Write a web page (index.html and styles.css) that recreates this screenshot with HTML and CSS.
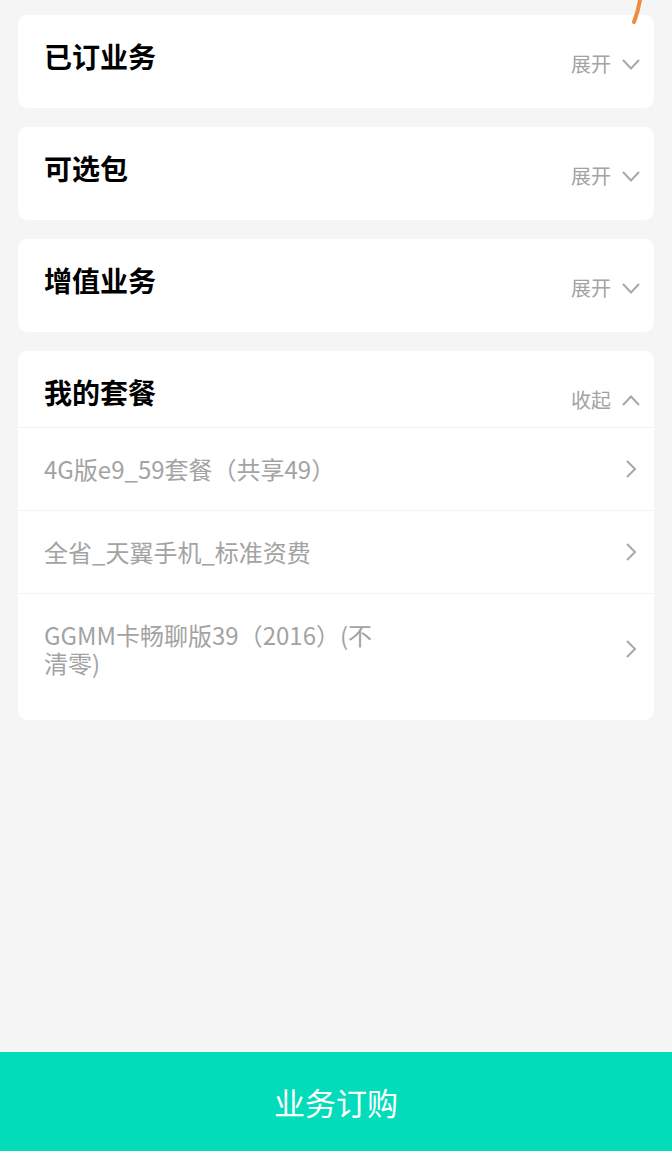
FILE: index.html
```html
<!DOCTYPE html>
<html lang="zh-CN">
<head>
    <meta charset="utf-8" />
    <title>业务订购</title>
    <link rel="stylesheet" href="styles.css">
</head>
<body>
    <div class="page">
        <div class="content">
            <div class="card">
                <div class="card-head">
                    <span class="title">已订业务</span>
                    <span class="toggle">展开
                        <svg class="arrow" width="18" height="11" viewBox="0 0 18 11"><path d="M1 1 L9 9.5 L17 1" /></svg>
                    </span>
                </div>
            </div>
            <div class="card">
                <div class="card-head">
                    <span class="title">可选包</span>
                    <span class="toggle">展开
                        <svg class="arrow" width="18" height="11" viewBox="0 0 18 11"><path d="M1 1 L9 9.5 L17 1" /></svg>
                    </span>
                </div>
            </div>
            <div class="card">
                <div class="card-head">
                    <span class="title">增值业务</span>
                    <span class="toggle">展开
                        <svg class="arrow" width="18" height="11" viewBox="0 0 18 11"><path d="M1 1 L9 9.5 L17 1" /></svg>
                    </span>
                </div>
            </div>
            <div class="card">
                <div class="card-head">
                    <span class="title">我的套餐</span>
                    <span class="toggle">收起
                        <svg class="arrow" width="18" height="11" viewBox="0 0 18 11"><path d="M1 10 L9 1.5 L17 10" /></svg>
                    </span>
                </div>
                <ul class="list">
                    <li>
                        <span class="name">4G版e9_59套餐（共享49）</span>
                        <svg class="more" width="12" height="18" viewBox="0 0 12 18"><path d="M2 1 L10 9 L2 17" /></svg>
                    </li>
                    <li>
                        <span class="name">全省_天翼手机_标准资费</span>
                        <svg class="more" width="12" height="18" viewBox="0 0 12 18"><path d="M2 1 L10 9 L2 17" /></svg>
                    </li>
                    <li>
                        <span class="name">GGMM卡畅聊版39（2016）(不清零)</span>
                        <svg class="more" width="12" height="18" viewBox="0 0 12 18"><path d="M2 1 L10 9 L2 17" /></svg>
                    </li>
                </ul>
            </div>
        </div>
        <div class="buy">业务订购</div>
    </div>
    <!--右上角的笔迹-->
    <svg class="mark" width="20" height="26" viewBox="0 0 20 26"><path d="M13 0 Q11 12 7 22" /></svg>
</body>
</html>
```

FILE: styles.css
```css
body,
div,
ul,
li
{
    margin: 0;
    padding: 0;
}

ul
{
    list-style-type: none;
}

body
{
    background: #f5f5f5;
    font-family: "Noto Sans CJK SC", "Noto Sans", sans-serif;
    color: #000;
}

.page
{
    display: flex;
    flex-direction: column;
    min-height: 1151px;
}

.content
{
    display: flex;
    flex-direction: column;
    gap: 19px;
    padding: 15px 18px 0;
}

.card
{
    background: #fff;
    border-radius: 9px;
    padding-bottom: 17px;
}

    .card-head
    {
        display: flex;
        justify-content: space-between;
        align-items: flex-start;
        height: 76px;
        box-sizing: border-box;
        padding: 21px 14px 0 26px;
    }

        .card-head .title
        {
            font-size: 28px;
            line-height: 40px;
            font-weight: 700;
            color: #000;
        }

        .card-head .toggle
        {
            display: flex;
            align-items: center;
            gap: 11px;
            margin-top: 14px;
            font-size: 20px;
            line-height: 28px;
            color: #a3a3a3;
        }

        .arrow path
        {
            fill: none;
            stroke: #a8a8a8;
            stroke-width: 2;
        }

    .list li
    {
        display: flex;
        justify-content: space-between;
        align-items: center;
        border-top: 1px solid #f2f2f2;
        padding: 27px 17px 27px 26px;
    }

        .list li:last-child
        {
            padding-bottom: 0;
            min-height: 110px;
            box-sizing: border-box;
            padding-top: 0;
        }

        .list .name
        {
            max-width: 345px;
            font-size: 24px;
            line-height: 28px;
            color: #a3a3a3;
        }

        .more path
        {
            fill: none;
            stroke: #a8a8a8;
            stroke-width: 2;
        }

.buy
{
    margin-top: auto;
    height: 99px;
    background: #02dcba;
    color: #fff;
    font-size: 31px;
    line-height: 99px;
    text-align: center;
}

.mark
{
    position: absolute;
    top: 0;
    left: 627px;
}

    .mark path
    {
        fill: none;
        stroke: #ef8a3f;
        stroke-width: 4;
        stroke-linecap: round;
    }
```
